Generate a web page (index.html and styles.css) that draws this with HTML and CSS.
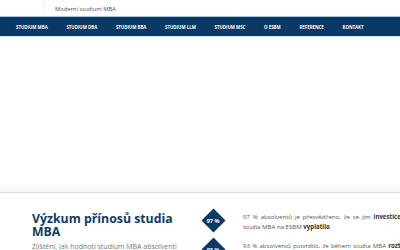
FILE: index.html
```html
<!DOCTYPE html>
<html lang="cs">
<head>
<meta charset="utf-8">
<title>ESBM</title>
<link rel="stylesheet" href="styles.css">
</head>
<body>
<div class="page">
  <header class="top">
    <div class="logo"></div>
    <div class="tagline">Moderní studium MBA</div>
  </header>
  <nav class="menu">
    <a>Studium MBA</a>
    <a>Studium DBA</a>
    <a>Studium BBA</a>
    <a>Studium LLM</a>
    <a>Studium MSc</a>
    <a>O ESBM</a>
    <a>Reference</a>
    <a>Kontakt</a>
  </nav>
  <div class="hero"></div>
  <section class="research">
    <div class="intro">
      <h2>Výzkum přínosů studia MBA</h2>
      <p>Zjištění, jak hodnotí studium MBA absolventi</p>
    </div>
    <div class="stats">
      <div class="stat">
        <div class="badge"><span>97 %</span></div>
        <p>97 % absolventů je přesvědčeno, že se jim <b>investice</b> do studia MBA na ESBM <b>vyplatila</b>.</p>
      </div>
      <div class="stat">
        <div class="badge"><span>93 %</span></div>
        <p>93 % absolventů potvrdilo, že během studia MBA <b>rozšířili</b> své znalosti a dovednosti v oblasti řízení.</p>
      </div>
    </div>
  </section>
</div>
</body>
</html>
```
FILE: styles.css
```css
* { box-sizing: border-box; }
html, body { margin: 0; padding: 0; }
body {
  font-family: "Open Sans", "Noto Sans", sans-serif;
  background: #fff;
  width: 400px;
  height: 250px;
  overflow: hidden;
}
.page { width: 400px; height: 250px; overflow: hidden; }
.top {
  height: 16px;
  display: flex;
  align-items: center;
}
.logo {
  width: 45px;
  height: 13px;
  align-self: flex-start;
  border-right: 1px solid #f1f1f1;
}
.tagline {
  margin-left: 10px;
  font-size: 5.8px;
  color: #3a5373;
  padding-top: 2px;
}
.menu {
  height: 21px;
  background: #0a3966;
  border-top: 1px solid #a8c7db;
  border-bottom: 1px solid #cfe5ef;
  display: flex;
  align-items: center;
  padding-left: 16px;
}
.menu a {
  color: #fff;
  text-transform: uppercase;
  font-weight: 700;
  font-size: 4.4px;
  white-space: nowrap;
  margin-right: 18.7px;
}
.hero {
  height: 156px;
  background: linear-gradient(to bottom, #fff 0, #fff 137px, #f2f2f2 150px, #ebebeb 155px);
  border-bottom: 1px solid #e0e0e0;
  border-top: 8px solid #fbfefd;
}
.research {
  display: flex;
  padding-top: 15px;
  width: 440px;
}
.intro {
  width: 182px;
  padding: 4px 0 0 32px;
  flex-shrink: 0;
}
.intro h2 {
  margin: 0;
  font-size: 12.3px;
  line-height: 13px;
  font-weight: 700;
  color: #143b60;
}
.intro p {
  margin: 4px 0 0;
  font-size: 7px;
  line-height: 10px;
  color: #777;
  white-space: nowrap;
}
.stats {
  width: 229px;
  flex-shrink: 0;
}
.stat {
  display: flex;
  align-items: flex-start;
  height: 29px;
}
.badge {
  width: 17px;
  height: 17px;
  background: #0d3a63;
  transform: rotate(45deg);
  margin: 3.5px 0 0 23px;
  display: flex;
  align-items: center;
  justify-content: center;
  flex-shrink: 0;
}
.badge span {
  transform: rotate(-45deg);
  color: #fff;
  font-size: 5.6px;
  font-weight: 700;
  white-space: nowrap;
}
.stat p {
  margin: 4px 0 0 21px;
  font-size: 6.1px;
  line-height: 9.5px;
  color: #555;
  text-align: justify;
  flex: 1;
}
.stat p b { color: #333; }
```
